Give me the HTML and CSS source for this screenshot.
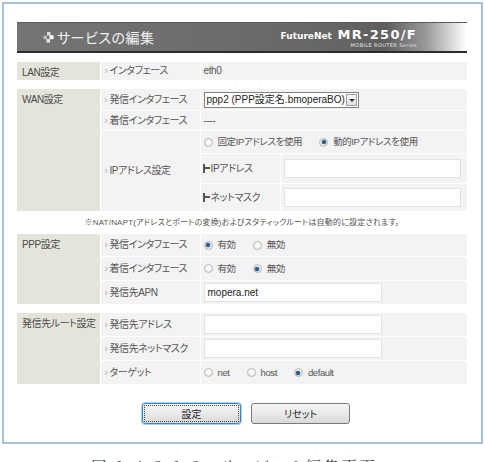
FILE: index.html
```html
<!DOCTYPE html>
<html>
<head>
    <meta charset="utf-8">
    <title>サービスの編集</title>
    <link rel="stylesheet" href="styles.css">
</head>
<body>
    <div class="frame">
        <div class="head">
            <div class="title">
                <svg class="title-icon" width="11" height="11" viewBox="0 0 11 11">
                    <rect x="4" y="0" width="3.5" height="3.5" fill="#dcdcdc"/>
                    <rect x="0.5" y="3.7" width="3.5" height="3.5" fill="#bdbdbd"/>
                    <rect x="6.5" y="3.2" width="4" height="4" fill="#ffffff"/>
                    <rect x="3.5" y="7" width="3.5" height="3.5" fill="#e8e8e8"/>
                </svg>
                <span>サービスの編集</span>
            </div>
            <div class="logo">
                <div class="logo-main"><span class="logo-brand">FutureNet</span> <span class="logo-model">MR-250/F</span></div>
                <div class="logo-sub">MOBILE ROUTER Series</div>
            </div>
        </div>

        <table class="grp">
            <colgroup><col class="c1"><col class="c2"><col class="c3"><col class="c4"></colgroup>
            <tr class="h19">
                <th>LAN設定</th>
                <td class="item">インタフェース</td>
                <td class="val" colspan="2">eth0</td>
            </tr>
        </table>

        <table class="grp grp-noted">
            <colgroup><col class="c1"><col class="c2"><col class="c3"><col class="c4"></colgroup>
            <tr class="h22">
                <th rowspan="5">WAN設定</th>
                <td class="item">発信インタフェース</td>
                <td class="val" colspan="2">
                    <div class="sel"><span class="sel-text">ppp2 (PPP設定名.bmoperaBO)</span><span class="sel-btn"></span></div>
                </td>
            </tr>
            <tr class="h20">
                <td class="item">着信インタフェース</td>
                <td class="val" colspan="2">----</td>
            </tr>
            <tr class="h23">
                <td class="item" rowspan="3">IPアドレス設定</td>
                <td class="val" colspan="2">
                    <div class="radios">
                        <label class="opt"><span class="rd"></span>固定IPアドレスを使用</label>
                        <label class="opt"><span class="rd on"></span>動的IPアドレスを使用</label>
                    </div>
                </td>
            </tr>
            <tr class="h30">
                <td class="sub"><span class="tee"></span>IPアドレス</td>
                <td class="val"><div class="box box-ip"></div></td>
            </tr>
            <tr class="h28">
                <td class="sub"><span class="tee"></span>ネットマスク</td>
                <td class="val"><div class="box box-ip"></div></td>
            </tr>
        </table>

        <p class="note">※NAT/NAPT(アドレスとポートの変換)およびスタティックルートは自動的に設定されます。</p>

        <table class="grp">
            <colgroup><col class="c1"><col class="c2"><col class="c3"><col class="c4"></colgroup>
            <tr class="h23">
                <th rowspan="3">PPP設定</th>
                <td class="item">発信インタフェース</td>
                <td class="val" colspan="2">
                    <div class="radios">
                        <label class="opt"><span class="rd on"></span>有効</label>
                        <label class="opt"><span class="rd"></span>無効</label>
                    </div>
                </td>
            </tr>
            <tr class="h24">
                <td class="item">着信インタフェース</td>
                <td class="val" colspan="2">
                    <div class="radios">
                        <label class="opt"><span class="rd"></span>有効</label>
                        <label class="opt"><span class="rd on"></span>無効</label>
                    </div>
                </td>
            </tr>
            <tr class="h24">
                <td class="item">発信先APN</td>
                <td class="val" colspan="2"><div class="box">mopera.net</div></td>
            </tr>
        </table>

        <table class="grp">
            <colgroup><col class="c1"><col class="c2"><col class="c3"><col class="c4"></colgroup>
            <tr class="h24">
                <th rowspan="3">発信先ルート設定</th>
                <td class="item">発信先アドレス</td>
                <td class="val" colspan="2"><div class="box"></div></td>
            </tr>
            <tr class="h24">
                <td class="item">発信先ネットマスク</td>
                <td class="val" colspan="2"><div class="box"></div></td>
            </tr>
            <tr class="h24">
                <td class="item">ターゲット</td>
                <td class="val" colspan="2">
                    <div class="radios">
                        <label class="opt"><span class="rd"></span>net</label>
                        <label class="opt"><span class="rd"></span>host</label>
                        <label class="opt"><span class="rd on"></span>default</label>
                    </div>
                </td>
            </tr>
        </table>

        <div class="actions">
            <button class="btn btn-focus">設定</button>
            <button class="btn">リセット</button>
        </div>
    </div>
    <p class="caption">図 1-4-2-1-2　サービスの編集画面</p>
</body>
</html>
```

FILE: styles.css
```css
* {
    box-sizing: border-box;
}

body {
    margin: 0;
    padding: 0;
    font-family: "Liberation Sans", "Noto Sans CJK JP", sans-serif;
    font-feature-settings: "palt";
    color: #555;
    background-color: #fff;
}

.frame {
    margin: 2px 2px 0;
    border: 2px solid #a9c0dd;
    padding: 18px 14px 18px 13px;
}

/* header bar */
.head {
    height: 31px;
    display: flex;
    align-items: center;
    justify-content: space-between;
    padding: 0 50px 0 26px;
    background: linear-gradient(to right, #747474 0%, #6c6c6c 45%, #666 70%, #5e5e5e 82%, #9a9a9a 91%, #fff 100%);
    border-top: 1px solid #5a5a5a;
    border-bottom: 2px solid #2c2c2c;
    margin-bottom: 8px;
}

.title {
    display: flex;
    align-items: center;
    color: #f2f2f2;
    font-family: "Noto Sans CJK JP", sans-serif;
    font-size: 14px;
    letter-spacing: 0.5px;
}

.title-icon {
    margin-right: 3px;
}

.logo {
    color: #fff;
    font-family: "DejaVu Sans", sans-serif;
    font-weight: bold;
    text-align: right;
    line-height: 1;
}

.logo-brand {
    font-size: 9px;
}

.logo-model {
    font-size: 13px;
    letter-spacing: 1.3px;
}

.logo-sub {
    font-size: 5px;
    font-weight: normal;
    letter-spacing: 0.4px;
    color: #e6e6e6;
    margin-top: 1px;
}

/* setting tables */
.grp {
    width: 450px;
    table-layout: fixed;
    border-collapse: collapse;
    font-size: 10px;
    line-height: 14px;
    letter-spacing: -0.4px;
    margin-bottom: 7px;
}

.grp-noted {
    margin-bottom: 0;
}

.c1 { width: 83px; }
.c2 { width: 100px; }
.c3 { width: 80px; }
.c4 { width: 187px; }

.grp th,
.grp td {
    border: 1px solid #fff;
    padding: 0;
    white-space: nowrap;
}

.grp th {
    background-color: #e4e4db;
    font-weight: normal;
    text-align: left;
    vertical-align: top;
    padding: 4px 0 0 5px;
    border-left: none;
    color: #4a4a4a;
}

.grp td {
    background-color: #f3f3f3;
    vertical-align: middle;
}

.grp .item {
    padding-left: 4px;
}

.grp .item::before {
    content: "\203A";
    color: #b0b0b0;
    margin-right: 2px;
}

.grp .val {
    padding-left: 3px;
}

.grp .sub {
    padding-left: 2px;
}

.tee {
    display: inline-block;
    position: relative;
    width: 6px;
    height: 9px;
    border-left: 2px solid #555;
    margin-right: 2px;
    vertical-align: -1px;
}

.tee::after {
    content: "";
    position: absolute;
    left: 0;
    top: 3.5px;
    width: 5px;
    height: 2px;
    background-color: #555;
}

.h19 { height: 19px; }
.h20 { height: 20px; }
.h22 { height: 22px; }
.h23 { height: 23px; }
.h24 { height: 24px; }
.h28 { height: 28px; }
.h30 { height: 30px; }

.sel {
    display: flex;
    align-items: center;
    width: 155px;
    height: 16px;
    border: 1px solid #808080;
    background-color: #fff;
    color: #222;
    padding-left: 2px;
    letter-spacing: 0;
}

.sel-text {
    flex: 1;
}

.sel-btn {
    flex: none;
    width: 11px;
    height: 12px;
    margin-right: 1px;
    border: 1px solid #a0a0a0;
    background: linear-gradient(#fafafa, #dedede);
    position: relative;
}

.sel-btn::after {
    content: "";
    position: absolute;
    left: 2px;
    top: 4px;
    border-left: 3px solid transparent;
    border-right: 3px solid transparent;
    border-top: 3px solid #333;
}

.box {
    width: 178px;
    height: 19px;
    border: 1px solid #e2e2e2;
    background-color: #fff;
    color: #222;
    padding: 1px 3px;
    font-size: 10px;
    letter-spacing: 0;
    line-height: 15px;
}

.box-ip {
    width: 177px;
}

.radios {
    display: flex;
    align-items: center;
    font-size: 9.5px;
}

.opt {
    display: flex;
    align-items: center;
    margin-right: 17px;
}

.rd {
    width: 9px;
    height: 9px;
    border-radius: 50%;
    border: 1px solid #b8b8b8;
    background: radial-gradient(circle at 50% 40%, #fff 0%, #e6e6e6 100%);
    margin-right: 5px;
    position: relative;
}

.rd.on::after {
    content: "";
    position: absolute;
    left: 1.5px;
    top: 1.5px;
    width: 4px;
    height: 4px;
    border-radius: 50%;
    background-color: #2d5c8a;
    box-shadow: 0 0 0 0.5px #6f9cc6;
}

.note {
    margin: 0;
    height: 21px;
    line-height: 21px;
    font-size: 8px;
    text-align: center;
    color: #555;
    letter-spacing: 0.2px;
}

/* buttons */
.actions {
    display: flex;
    justify-content: center;
    gap: 10px;
    padding-top: 11px;
    padding-left: 8px;
}

.btn {
    width: 99px;
    height: 21px;
    font-family: "Noto Sans CJK JP", sans-serif;
    font-feature-settings: "palt";
    font-size: 10px;
    color: #222;
    border: 1px solid #7a7a7a;
    border-radius: 3px;
    background: linear-gradient(#f6f6f6, #e9e9e9 50%, #dadada);
    padding: 0;
}

.btn-focus {
    border-color: #3d85c1;
    box-shadow: 0 0 0 1px #a8d0ef;
    outline: 1px dotted #444;
    outline-offset: -3px;
}

.caption {
    margin: 11px 0 0;
    text-align: center;
    font-family: "Noto Serif CJK JP", "Noto Sans CJK JP", serif;
    font-size: 15px;
    letter-spacing: 3px;
    color: #333;
    padding-right: 16px;
}
```
